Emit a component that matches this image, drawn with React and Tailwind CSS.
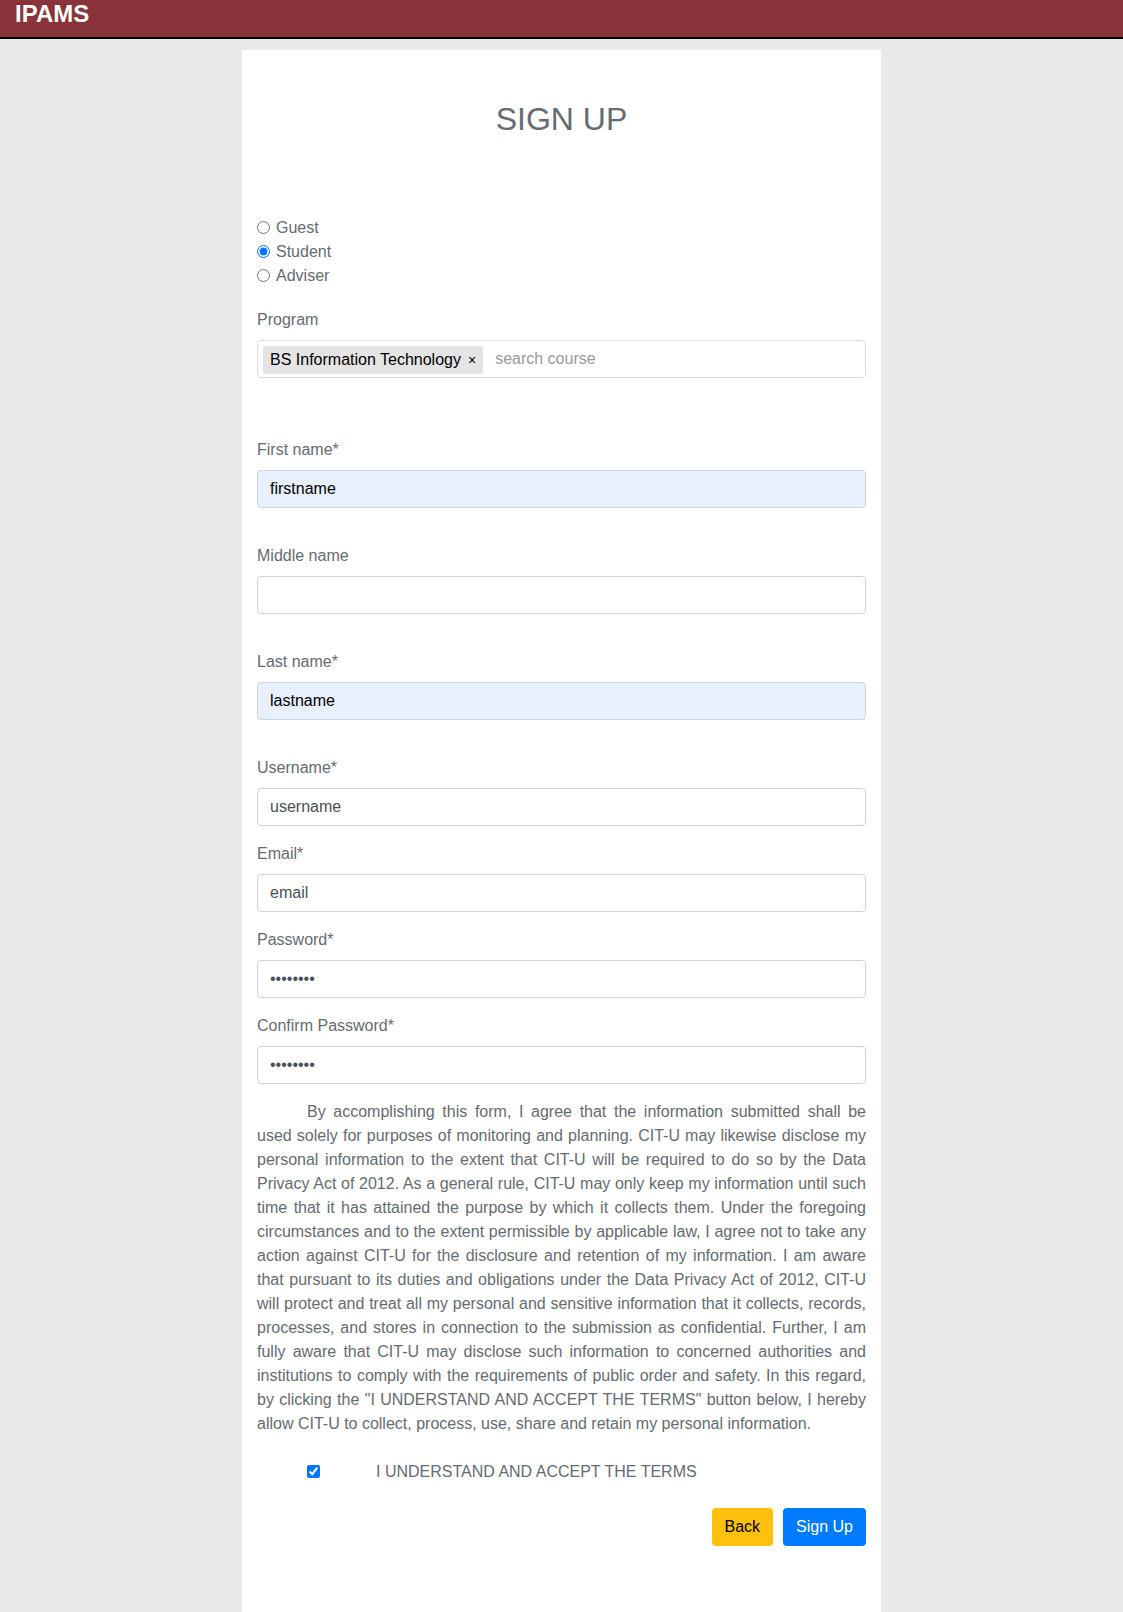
import { useState } from "react";

const inputClass =
  "block h-[38px] w-full rounded border border-[#ced4da] px-3 text-base outline-none focus:border-[#80bdff]";

function Field({ id, label, type = "text", value, filled = false, spacious = false }) {
  return (
    <div className={spacious ? "mb-9" : "mb-4"}>
      <label htmlFor={id} className="mb-2 block">
        {label}
      </label>
      <input
        id={id}
        name={id}
        type={type}
        defaultValue={value}
        className={`${inputClass} ${filled ? "bg-[#e8f0fe] text-black" : "bg-white text-[#495057]"}`}
      />
    </div>
  );
}

function RoleOption({ value, selected, onSelect }) {
  return (
    <label className="flex h-6 items-start">
      <input
        type="radio"
        name="role"
        value={value}
        checked={selected === value}
        onChange={() => onSelect(value)}
        className="mt-[5px] mr-[6px] size-[13px] accent-[#0075ff]"
      />
      {value}
    </label>
  );
}

export default function App() {
  const [role, setRole] = useState("Student");
  const [course, setCourse] = useState("BS Information Technology");
  const [accepted, setAccepted] = useState(true);

  return (
    <div className="flex min-h-screen flex-col bg-[#e9e9e9] font-['Liberation_Sans',Arial,sans-serif] text-base text-[#666b70]">
      <header className="flex border-b-2 border-black bg-[#89343b] px-[15px] pb-[9px]">
        <a href="#" className="text-2xl leading-7 font-bold text-white">
          IPAMS
        </a>
      </header>

      <main className="mx-auto mt-[11px] w-full max-w-[639px] grow bg-white px-[15px] pt-[50px] pb-[66px]">
        <h1 className="mb-[78px] text-center text-[32px] leading-[38px]">SIGN UP</h1>

        <form onSubmit={(event) => event.preventDefault()}>
          <fieldset aria-label="Account type" className="mb-5">
            <RoleOption value="Guest" selected={role} onSelect={setRole} />
            <RoleOption value="Student" selected={role} onSelect={setRole} />
            <RoleOption value="Adviser" selected={role} onSelect={setRole} />
          </fieldset>

          <div className="mb-[60px]">
            <label htmlFor="program" className="mb-2 block">
              Program
            </label>
            <div className="flex h-[38px] items-start rounded border border-[#dddddd] pl-[5px]">
              {course && (
                <span className="mt-[5px] flex h-7 items-center rounded-[3px] bg-[#e4e4e4] px-[7px] text-black">
                  {course}
                  <button
                    type="button"
                    aria-label={`Remove ${course}`}
                    onClick={() => setCourse("")}
                    className="ml-[7px] text-sm leading-6"
                  >
                    ×
                  </button>
                </span>
              )}
              <input
                id="program"
                type="text"
                placeholder="search course"
                className="h-9 min-w-0 grow bg-transparent px-3 outline-none placeholder:text-[#999999]"
              />
            </div>
          </div>

          <Field id="firstname" label="First name*" value="firstname" filled spacious />
          <Field id="middlename" label="Middle name" value="" spacious />
          <Field id="lastname" label="Last name*" value="lastname" filled spacious />
          <Field id="username" label="Username*" value="username" />
          <Field id="email" label="Email*" value="email" />
          <Field id="password" label="Password*" type="password" value="password" />
          <Field id="confirm" label="Confirm Password*" type="password" value="password" />

          <p className="mb-6 text-justify indent-[50px]">
            By accomplishing this form, I agree that the information submitted shall be used solely
            for purposes of monitoring and planning. CIT-U may likewise disclose my personal
            information to the extent that CIT-U will be required to do so by the Data Privacy Act
            of 2012. As a general rule, CIT-U may only keep my information until such time that it
            has attained the purpose by which it collects them. Under the foregoing circumstances
            and to the extent permissible by applicable law, I agree not to take any action against
            CIT-U for the disclosure and retention of my information. I am aware that pursuant to
            its duties and obligations under the Data Privacy Act of 2012, CIT-U will protect and
            treat all my personal and sensitive information that it collects, records, processes,
            and stores in connection to the submission as confidential. Further, I am fully aware
            that CIT-U may disclose such information to concerned authorities and institutions to
            comply with the requirements of public order and safety. In this regard, by clicking the
            "I UNDERSTAND AND ACCEPT THE TERMS" button below, I hereby allow CIT-U to collect,
            process, use, share and retain my personal information.
          </p>

          <label className="mb-6 flex items-start pl-[50px]">
            <input
              type="checkbox"
              checked={accepted}
              onChange={(event) => setAccepted(event.target.checked)}
              className="mt-[5px] mr-14 size-[13px] accent-[#0075ff]"
            />
            I UNDERSTAND AND ACCEPT THE TERMS
          </label>

          <div className="flex justify-end gap-[10px]">
            <button type="button" className="h-[38px] rounded bg-[#ffc10e] px-[13px] text-black">
              Back
            </button>
            <button type="submit" className="h-[38px] rounded bg-[#007bff] px-[13px] text-white">
              Sign Up
            </button>
          </div>
        </form>
      </main>
    </div>
  );
}
